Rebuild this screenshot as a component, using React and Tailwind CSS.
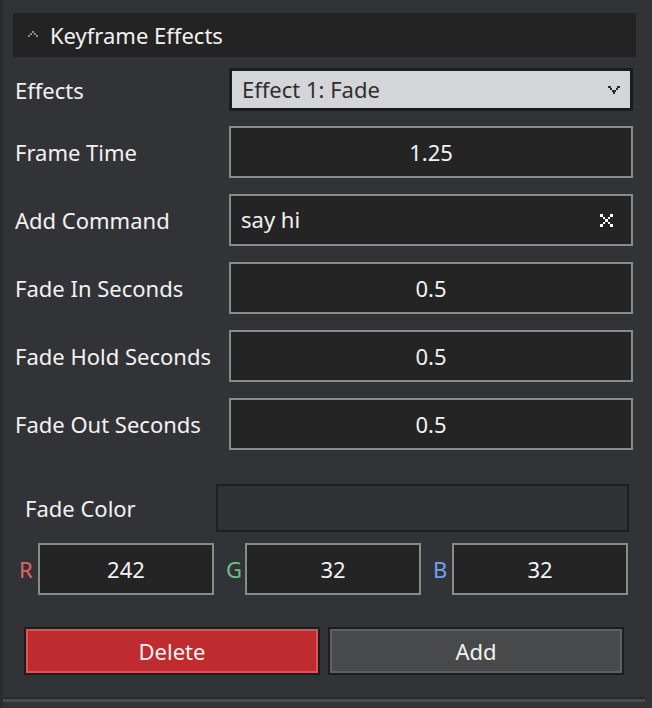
import React from "react";

const font = { fontFamily: '"Noto Sans", "Open Sans", sans-serif' };

function Caret() {
  return (
    <svg width="10" height="6" viewBox="0 0 10 6" shapeRendering="crispEdges" className="fill-[#8a8a8a]">
      <rect x="4" y="0" width="2" height="2" />
      <rect x="2" y="2" width="2" height="2" />
      <rect x="6" y="2" width="2" height="2" />
      <rect x="0" y="4" width="2" height="2" />
      <rect x="8" y="4" width="2" height="2" />
    </svg>
  );
}

function Chevron() {
  return (
    <svg width="12" height="8" viewBox="0 0 12 8" shapeRendering="crispEdges" className="fill-[#2a2a2a]">
      <rect x="0" y="0" width="3" height="2" />
      <rect x="9" y="0" width="3" height="2" />
      <rect x="2" y="2" width="2" height="2" />
      <rect x="8" y="2" width="2" height="2" />
      <rect x="4" y="4" width="4" height="2" />
      <rect x="5" y="6" width="2" height="2" />
    </svg>
  );
}

function ClearIcon() {
  const cells = [
    [0, 0], [1, 1], [2, 2], [3, 3], [4, 4],
    [4, 0], [3, 1], [1, 3], [0, 4],
  ];
  return (
    <svg width="13" height="13" viewBox="0 0 13 13" shapeRendering="crispEdges" className="fill-white">
      {cells.map(([x, y]) => (
        <rect key={`${x}-${y}`} x={x * 2.6} y={y * 2.6} width="2.6" height="2.6" />
      ))}
    </svg>
  );
}

function Field({ label, value, mt = "mt-4" }) {
  return (
    <div className={`flex items-center ${mt}`}>
      <div className="w-[214px] text-[22px] text-[#f2f2f2] leading-none">{label}</div>
      <div className="w-[404px] h-[52px] border-2 border-[#8a8a8a] bg-[#242424] flex items-center justify-center text-[22px] text-[#f2f2f2]">
        {value}
      </div>
    </div>
  );
}

function Channel({ letter, color, value }) {
  return (
    <div className="flex items-center">
      <span className={`w-[19px] text-[22px] ${color}`}>{letter}</span>
      <div className="w-[176px] h-[52px] border-2 border-[#8a8a8a] bg-[#242424] flex items-center justify-center text-[22px] text-[#f2f2f2]">
        {value}
      </div>
    </div>
  );
}

export default function App() {
  return (
    <div style={font} className="w-[652px] h-[708px] bg-[#323336] border-l-[3px] border-[#2a2b2d] overflow-hidden">
      <div className="ml-[10px] mt-[13px] w-[623px] h-[44px] bg-[#232323] flex items-center">
        <div className="ml-[15px] mb-[2px]">
          <Caret />
        </div>
        <span className="ml-[12px] text-[22px] text-[#f2f2f2]">Keyframe Effects</span>
      </div>

      <div className="pl-[12px]">
        <div className="flex items-center mt-[11px]">
          <div className="w-[214px] text-[22px] text-[#f2f2f2] leading-none">Effects</div>
          <div className="w-[404px] h-[43px] border-[3px] border-[#1c1c1d] bg-[#d4d5d9] flex items-center justify-between pl-[10px] pr-[10px]">
            <span className="text-[22px] text-[#2e2e2e]">Effect 1: Fade</span>
            <Chevron />
          </div>
        </div>

        <Field label="Frame Time" value="1.25" mt="mt-[15px]" />

        <div className="flex items-center mt-[16px]">
          <div className="w-[214px] text-[22px] text-[#f2f2f2] leading-none">Add Command</div>
          <div className="w-[404px] h-[52px] border-2 border-[#8a8a8a] bg-[#242424] flex items-center justify-between pl-[10px] pr-[18px] text-[22px] text-[#f2f2f2]">
            <span className="-mt-[2px]">say hi</span>
            <ClearIcon />
          </div>
        </div>

        <Field label="Fade In Seconds" value="0.5" mt="mt-[16px]" />
        <Field label="Fade Hold Seconds" value="0.5" mt="mt-[16px]" />
        <Field label="Fade Out Seconds" value="0.5" mt="mt-[16px]" />

        <div className="flex items-center mt-[34px]">
          <div className="w-[201px] pl-[10px] text-[22px] text-[#f2f2f2]">Fade Color</div>
          <div className="w-[413px] h-[48px] border-2 border-[#1f1f20] bg-[#313235]"></div>
        </div>

        <div className="flex items-center mt-[11px] ml-[4px] gap-[12px]">
          <Channel letter="R" color="text-[#e06464]" value="242" />
          <Channel letter="G" color="text-[#6dbf88]" value="32" />
          <Channel letter="B" color="text-[#70a0ee]" value="32" />
        </div>

        <div className="flex mt-[32px] ml-[9px] gap-[8px]">
          <button className="w-[296px] h-[48px] border-2 border-[#1d1d1e] bg-[#bf2b2e] shadow-[inset_0_0_0_2px_#d65558] text-[22px] text-[#f5f5f5]">
            Delete
          </button>
          <button className="w-[296px] h-[48px] border-2 border-[#1d1d1e] bg-[#48494b] shadow-[inset_0_0_0_2px_#5f6062] text-[22px] text-[#f2f2f2]">
            Add
          </button>
        </div>
      </div>

      <div className="mt-[22px] w-[642px] h-[5px] border-t-2 border-[#28292b] bg-[#4a4b4e]"></div>
    </div>
  );
}
